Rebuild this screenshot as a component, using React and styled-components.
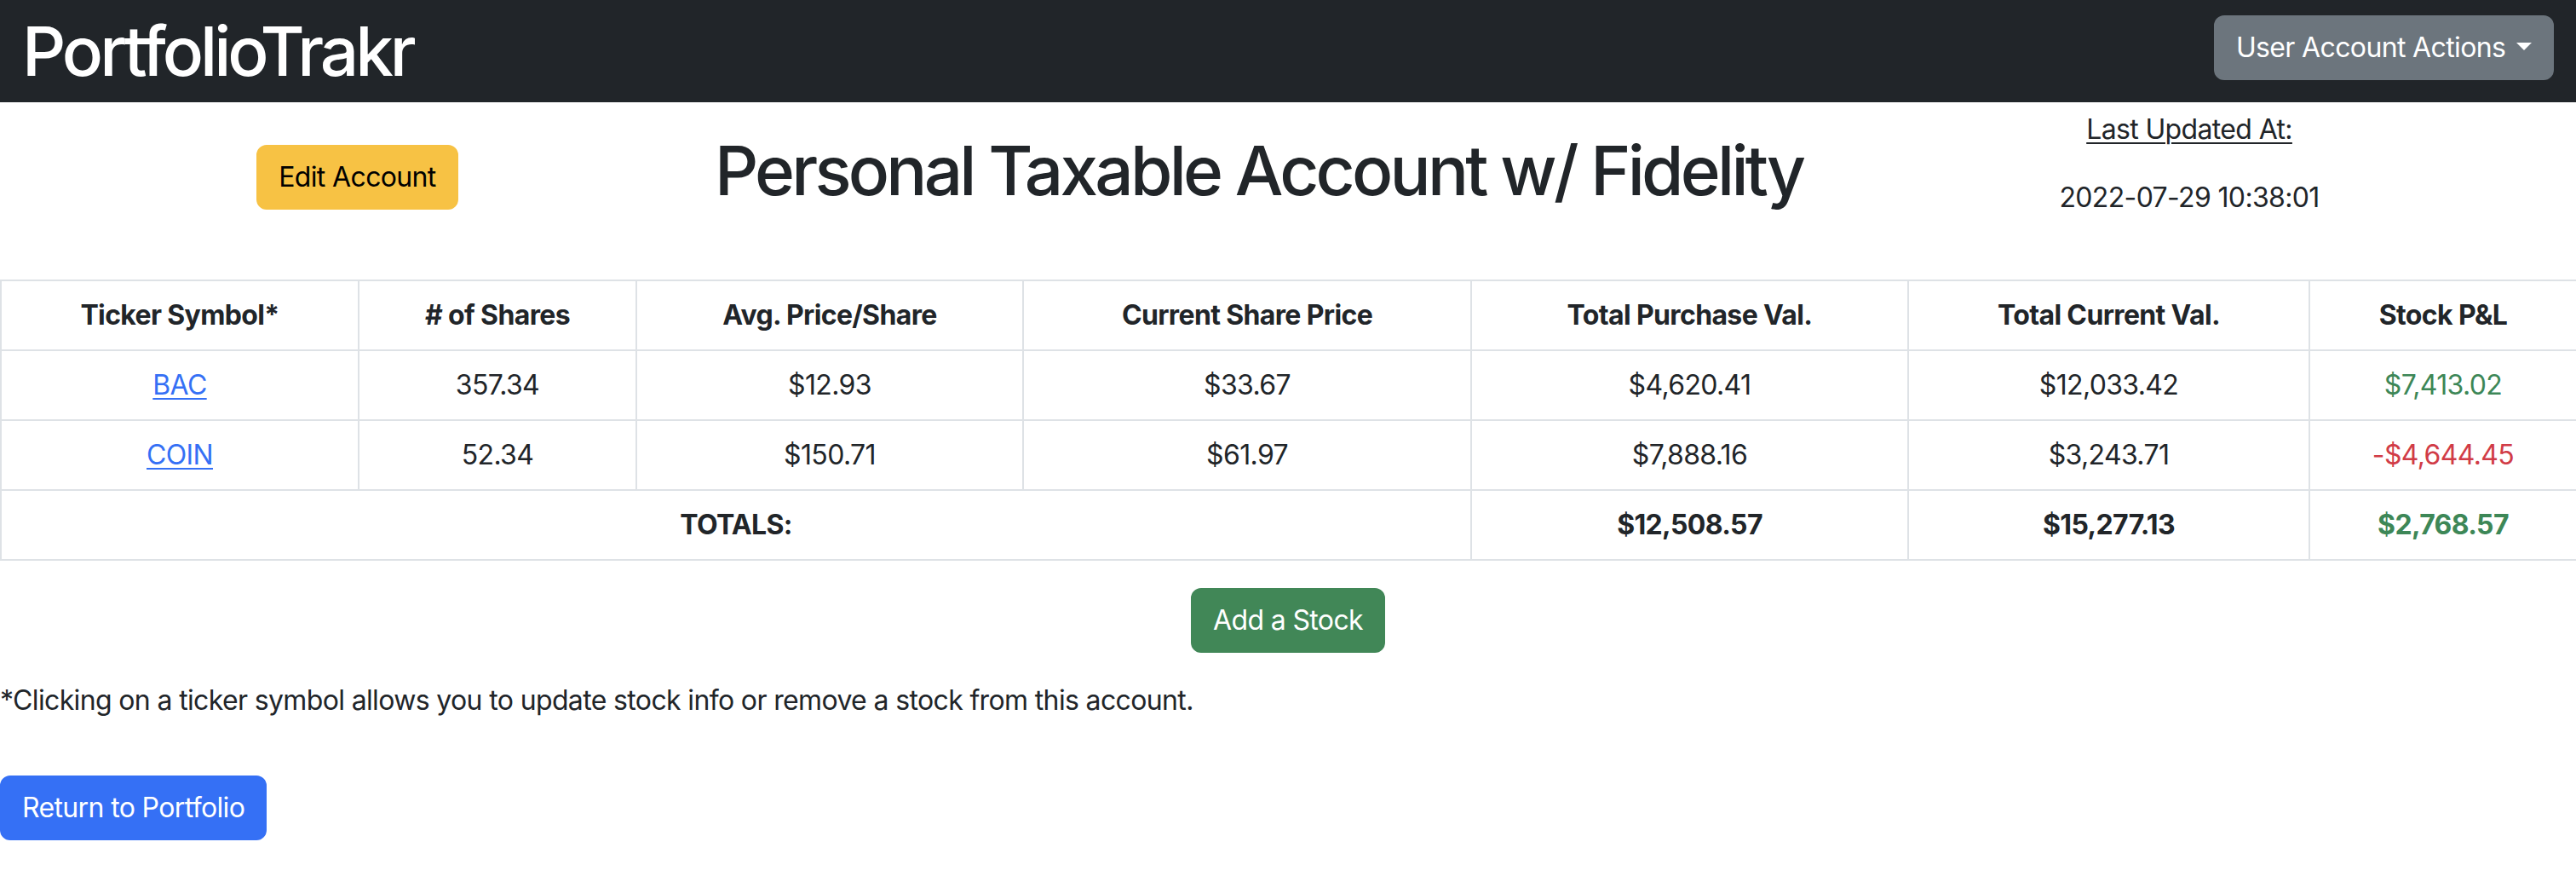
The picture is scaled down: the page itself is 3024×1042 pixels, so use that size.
import React from 'react';
import styled, { createGlobalStyle } from 'styled-components';

const GlobalStyle = createGlobalStyle`
  *, *::before, *::after {
    box-sizing: border-box;
  }

  body {
    margin: 0;
    background: #ffffff;
    color: #212529;
    font-family: Inter, "Liberation Sans", Arial, sans-serif;
    font-size: 32px;
    line-height: 1.5;
    letter-spacing: -0.02em;
  }
`;

const NavBar = styled.nav`
  display: flex;
  align-items: center;
  justify-content: space-between;
  height: 120px;
  padding: 0 26px 0 26px;
  background: #212529;
`;

const Brand = styled.a`
  color: #ffffff;
  font-size: 80px;
  font-weight: 500;
  line-height: 1.2;
  letter-spacing: -0.05em;
  text-decoration: none;
`;

const Button = styled.button`
  display: inline-block;
  padding: 12px 24px;
  border: 2px solid ${(p) => p.$bg};
  border-radius: 12px;
  background: ${(p) => p.$bg};
  color: ${(p) => p.$fg || '#ffffff'};
  font-family: inherit;
  font-size: 32px;
  font-weight: 400;
  line-height: 1.5;
  letter-spacing: inherit;
  cursor: pointer;
`;

const MenuButton = styled(Button)`
  margin-bottom: 8px;
`;

const Caret = styled.span`
  display: inline-block;
  margin-left: 0.4em;
  vertical-align: 0.255em;
  border-top: 0.3em solid;
  border-right: 0.3em solid transparent;
  border-left: 0.3em solid transparent;
  border-bottom: 0;
`;

const HeaderRow = styled.div`
  display: flex;
  align-items: center;
  justify-content: space-evenly;
  margin-top: 8px;
`;

const Title = styled.h1`
  margin: 0 0 16px;
  font-size: 80px;
  font-weight: 500;
  line-height: 1.2;
  letter-spacing: -0.047em;
`;

const Updated = styled.div`
  text-align: center;

  p {
    margin: 0 0 32px;
  }

  u {
    text-decoration-thickness: 2px;
    text-underline-offset: 4px;
  }
`;

const Table = styled.table`
  width: 100%;
  margin: 40px 0 32px;
  border-collapse: collapse;
  table-layout: fixed;

  th,
  td {
    padding: 16px;
    border: 2px solid #dee2e6;
    text-align: center;
    vertical-align: middle;
    white-space: nowrap;
  }

  th {
    font-weight: 700;
  }
`;

const Cell = styled.td`
  font-weight: ${(p) => (p.$bold ? 700 : 400)};
  color: ${(p) => p.$color || '#212529'};
`;

const TickerLink = styled.a`
  color: #3570f5;
  text-decoration: underline;
  text-decoration-thickness: 2px;
  text-underline-offset: 4px;
`;

const Centered = styled.div`
  display: flex;
  justify-content: center;
  margin-bottom: 32px;
`;

const Note = styled.p`
  margin: 0 0 64px;
`;

const GREEN = '#3d8757';
const RED = '#d13c47';

const stocks = [
  { ticker: 'BAC', shares: '357.34', avg: '$12.93', cur: '$33.67', buy: '$4,620.41', val: '$12,033.42', pl: '$7,413.02', up: true },
  { ticker: 'COIN', shares: '52.34', avg: '$150.71', cur: '$61.97', buy: '$7,888.16', val: '$3,243.71', pl: '-$4,644.45', up: false },
];

const widths = [420, 326, 454, 526, 513, 471, 314];

export default function App() {
  return (
    <>
      <GlobalStyle />
      <NavBar>
        <Brand href="#">PortfolioTrakr</Brand>
        <MenuButton $bg="#6c757d">
          User Account Actions
          <Caret />
        </MenuButton>
      </NavBar>

      <HeaderRow>
        <Button $bg="#f7c244" $fg="#000000">Edit Account</Button>
        <Title>Personal Taxable Account w/ Fidelity</Title>
        <Updated>
          <p><u>Last Updated At:</u></p>
          <p>2022-07-29 10:38:01</p>
        </Updated>
      </HeaderRow>

      <Table>
        <colgroup>
          {widths.map((w, i) => (
            <col key={i} style={{ width: w }} />
          ))}
        </colgroup>
        <thead>
          <tr>
            <th>Ticker Symbol*</th>
            <th># of Shares</th>
            <th>Avg. Price/Share</th>
            <th>Current Share Price</th>
            <th>Total Purchase Val.</th>
            <th>Total Current Val.</th>
            <th>Stock P&amp;L</th>
          </tr>
        </thead>
        <tbody>
          {stocks.map((s) => (
            <tr key={s.ticker}>
              <Cell><TickerLink href="#">{s.ticker}</TickerLink></Cell>
              <Cell>{s.shares}</Cell>
              <Cell>{s.avg}</Cell>
              <Cell>{s.cur}</Cell>
              <Cell>{s.buy}</Cell>
              <Cell>{s.val}</Cell>
              <Cell $color={s.up ? GREEN : RED}>{s.pl}</Cell>
            </tr>
          ))}
          <tr>
            <Cell colSpan={4} $bold>TOTALS:</Cell>
            <Cell $bold>$12,508.57</Cell>
            <Cell $bold>$15,277.13</Cell>
            <Cell $bold $color={GREEN}>$2,768.57</Cell>
          </tr>
        </tbody>
      </Table>

      <Centered>
        <Button $bg="#418757">Add a Stock</Button>
      </Centered>

      <Note>*Clicking on a ticker symbol allows you to update stock info or remove a stock from this account.</Note>

      <Button $bg="#3570f5">Return to Portfolio</Button>
    </>
  );
}
